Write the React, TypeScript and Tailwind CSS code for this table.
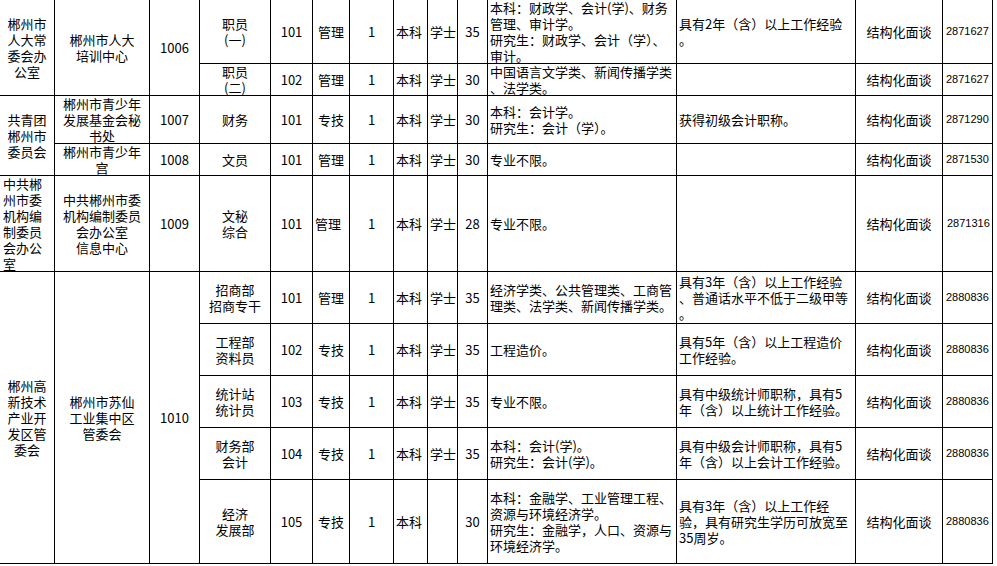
import React from "react";

type CellProps = {
  lines?: string[];
  className?: string;
  align?: "c" | "l";
};

function Cell({ lines = [], className = "", align = "c" }: CellProps) {
  const al =
    align === "c"
      ? "justify-center text-center"
      : "justify-start text-left pl-[2px]";
  return (
    <div
      className={`bg-white flex items-center whitespace-nowrap text-[13px] leading-[16px] text-black ${al} ${className}`}
    >
      <div>
        {lines.map((l, i) => (
          <React.Fragment key={i}>
            {i > 0 && <br />}
            {l}
          </React.Fragment>
        ))}
      </div>
    </div>
  );
}

function Phone({ n, className = "" }: { n: string; className?: string }) {
  return (
    <div
      className={`bg-white flex items-center justify-start pl-[3px] whitespace-nowrap font-['Liberation_Sans',Arial,sans-serif] text-[11px] text-black ${className}`}
    >
      {n}
    </div>
  );
}

type Row = {
  pos: string[];
  code: string;
  type: string;
  typeClass?: string;
  edu: string;
  deg: string;
  age: string;
  major: string[];
  exp: string[];
  phone: string;
  phoneClass?: string;
};

function RowCells({ r }: { r: Row }) {
  return (
    <>
      <Cell lines={r.pos} />
      <Cell lines={[r.code]} />
      <Cell lines={[r.type]} className={r.typeClass ?? ""} />
      <Cell lines={["1"]} />
      <Cell lines={[r.edu]} align="l" />
      <Cell lines={r.deg ? [r.deg] : []} align="l" />
      <Cell lines={[r.age]} />
      <Cell lines={r.major} align="l" />
      <Cell lines={r.exp} align="l" />
      <Cell lines={["结构化面谈"]} />
      <Phone n={r.phone} className={r.phoneClass ?? ""} />
    </>
  );
}

export default function App() {
  const r1: Row = {
    pos: ["职员", "(一)"],
    code: "101",
    type: "管理",
    edu: "本科",
    deg: "学士",
    age: "35",
    major: [
      "本科：财政学、会计(学)、财务",
      "管理、审计学。",
      "研究生：财政学、会计（学）、",
      "审计。",
    ],
    exp: ["具有2年（含）以上工作经验", "。"],
    phone: "2871627",
  };
  const r2: Row = {
    pos: ["职员", "(二)"],
    code: "102",
    type: "管理",
    edu: "本科",
    deg: "学士",
    age: "30",
    major: ["中国语言文学类、新闻传播学类", "、法学类。"],
    exp: [],
    phone: "2871627",
  };
  const r3: Row = {
    pos: ["财务"],
    code: "101",
    type: "专技",
    edu: "本科",
    deg: "学士",
    age: "30",
    major: ["本科：会计学。", "研究生：会计（学）。"],
    exp: ["获得初级会计职称。"],
    phone: "2871290",
  };
  const r4: Row = {
    pos: ["文员"],
    code: "101",
    type: "管理",
    edu: "本科",
    deg: "学士",
    age: "30",
    major: ["专业不限。"],
    exp: [],
    phone: "2871530",
  };
  const r5: Row = {
    pos: ["文秘", "综合"],
    code: "101",
    type: "管理",
    typeClass: "pr-[6px]",
    edu: "本科",
    deg: "学士",
    age: "28",
    major: ["专业不限。"],
    exp: [],
    phone: "2871316",
    phoneClass: "pl-[4px]",
  };
  const r6: Row = {
    pos: ["招商部", "招商专干"],
    code: "101",
    type: "管理",
    edu: "本科",
    deg: "学士",
    age: "35",
    major: ["经济学类、公共管理类、工商管", "理类、法学类、新闻传播学类。"],
    exp: ["具有3年（含）以上工作经验", "、普通话水平不低于二级甲等", "。"],
    phone: "2880836",
  };
  const r7: Row = {
    pos: ["工程部", "资料员"],
    code: "102",
    type: "专技",
    edu: "本科",
    deg: "学士",
    age: "35",
    major: ["工程造价。"],
    exp: ["具有5年（含）以上工程造价", "工作经验。"],
    phone: "2880836",
  };
  const r8: Row = {
    pos: ["统计站", "统计员"],
    code: "103",
    type: "专技",
    edu: "本科",
    deg: "学士",
    age: "35",
    major: ["专业不限。"],
    exp: ["具有中级统计师职称，具有5", "年（含）以上统计工作经验。"],
    phone: "2880836",
  };
  const r9: Row = {
    pos: ["财务部", "会计"],
    code: "104",
    type: "专技",
    edu: "本科",
    deg: "学士",
    age: "35",
    major: ["本科：会计(学)。", "研究生：会计(学)。"],
    exp: ["具有中级会计师职称，具有5", "年（含）以上会计工作经验。"],
    phone: "2880836",
  };
  const r10: Row = {
    pos: ["经济", "发展部"],
    code: "105",
    type: "专技",
    edu: "本科",
    deg: "",
    age: "30",
    major: [
      "本科：金融学、工业管理工程、",
      "资源与环境经济学。",
      "研究生：金融学，人口、资源与",
      "环境经济学。",
    ],
    exp: ["具有3年（含）以上工作经", "验，具有研究生学历可放宽至", "35周岁。"],
    phone: "2880836",
  };

  return (
    <div className="w-[997px] h-[566px] bg-white overflow-hidden font-['Noto_Sans_CJK_SC','Noto_Sans',sans-serif]">
      <div className="w-[993px] grid grid-cols-[54px_94px_49px_70px_41px_36px_43px_33px_29px_29px_188px_178px_86px_49px] grid-rows-[63px_31px_47px_31px_95px_51px_51px_51px_51px_83px] gap-px bg-black border-r border-b border-black">
        {/* 1006 */}
        <Cell className="row-span-2" lines={["郴州市", "人大常", "委会办", "公室"]} />
        <Cell className="row-span-2" lines={["郴州市人大", "培训中心"]} />
        <Cell className="row-span-2" lines={["1006"]} />
        <RowCells r={r1} />
        <RowCells r={r2} />
        {/* 1007 / 1008 */}
        <Cell className="row-span-2" lines={["共青团", "郴州市", "委员会"]} />
        <Cell className="leading-[15px]" lines={["郴州市青少年", "发展基金会秘", "书处"]} />
        <Cell lines={["1007"]} />
        <RowCells r={r3} />
        <Cell lines={["郴州市青少年", "宫"]} />
        <Cell lines={["1008"]} />
        <RowCells r={r4} />
        {/* 1009 */}
        <Cell
          align="l"
          className="pl-[3px]"
          lines={["中共郴", "州市委", "机构编", "制委员", "会办公", "室"]}
        />
        <Cell lines={["中共郴州市委", "机构编制委员", "会办公室", "信息中心"]} />
        <Cell lines={["1009"]} />
        <RowCells r={r5} />
        {/* 1010 */}
        <Cell className="row-span-5" lines={["郴州高", "新技术", "产业开", "发区管", "委会"]} />
        <Cell className="row-span-5" lines={["郴州市苏仙", "工业集中区", "管委会"]} />
        <Cell className="row-span-5" lines={["1010"]} />
        <RowCells r={r6} />
        <RowCells r={r7} />
        <RowCells r={r8} />
        <RowCells r={r9} />
        <RowCells r={r10} />
      </div>
    </div>
  );
}
